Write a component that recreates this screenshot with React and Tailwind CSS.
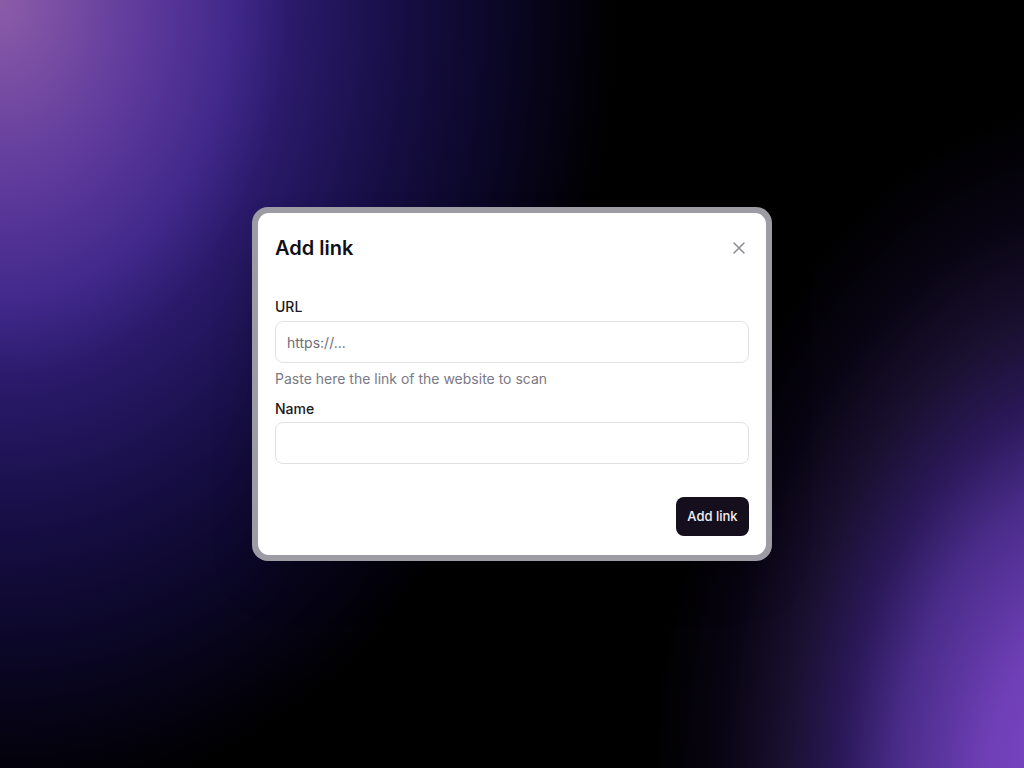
import { useState } from "react";

function App() {
  const [url, setUrl] = useState("");
  const [name, setName] = useState("");

  return (
    <div className="relative w-full h-[768px] overflow-hidden bg-black font-['Inter',sans-serif] flex items-center justify-center">
      {/* arka plan ışıkları */}
      <div className="absolute inset-0 bg-[radial-gradient(ellipse_650px_850px_at_0px_0px,#8c5ca8_0%,#5e3a9c_22%,#40288a_36%,#2a1a6a_45%,#160e44_62%,#0a0624_78%,#000_95%,transparent_100%)]"></div>
      <div className="absolute inset-0 bg-[radial-gradient(ellipse_450px_700px_at_1100px_800px,#8048c8_0%,#7040b8_25%,#4a2c8a_45%,#2a1858_58%,#1a1030_70%,#080412_85%,transparent_100%)]"></div>

      {/* modal */}
      <div className="relative w-[520px] rounded-[16px] bg-[#9d9ca4] p-[6px] shadow-2xl">
        <div className="bg-white rounded-[11px] px-[17px] pt-[20px] pb-[19px]">
          <div className="flex items-center justify-between">
            <h2 className="text-[20px] font-semibold text-[#111018] leading-[30px]">Add link</h2>
            <button className="w-5 h-5 flex items-center justify-center text-[#8b8b94]">
              <svg width="14" height="14" viewBox="0 0 14 14" fill="none" stroke="currentColor" strokeWidth="1.5" strokeLinecap="round">
                <path d="M2 2l10 10M12 2L2 12" />
              </svg>
            </button>
          </div>

          <div className="mt-[35px]">
            <label className="block text-[14px] font-medium text-[#1a1820] leading-[18px]">URL</label>
            <input
              value={url}
              onChange={(e) => setUrl(e.target.value)}
              placeholder="https://..."
              className="mt-[5px] w-full h-[42px] rounded-[8px] border border-[#e2e2e6] px-[11px] text-[14px] text-[#1a1820] placeholder:text-[#6e6d78] outline-none"
            />
            <p className="mt-[6px] text-[14px] text-[#7a7985] leading-[20px]">Paste here the link of the website to scan</p>
          </div>

          <div className="mt-[11px]">
            <label className="block text-[14px] font-medium text-[#1a1820] leading-[18px]">Name</label>
            <input
              value={name}
              onChange={(e) => setName(e.target.value)}
              className="mt-[4px] w-full h-[42px] rounded-[8px] border border-[#e2e2e6] px-[11px] text-[14px] text-[#1a1820] outline-none"
            />
          </div>

          <div className="flex justify-end mt-[33px]">
            <button className="h-[39px] w-[73px] rounded-[8px] bg-[#150e1d] text-[#f2f1f5] text-[13px] font-medium">Add link</button>
          </div>
        </div>
      </div>
    </div>
  );
}

export default App;
